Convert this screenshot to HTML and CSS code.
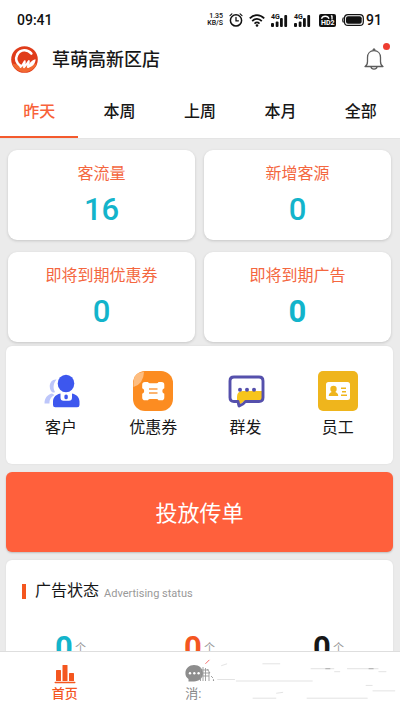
FILE: index.html
```html
<!DOCTYPE html>
<html lang="zh-CN">
<head>
<meta charset="utf-8">
<meta name="viewport" content="width=device-width, initial-scale=1">
<title>草萌高新区店</title>
<link rel="stylesheet" href="styles.css">
</head>
<body>
<div class="status-bar">
  <span class="clock">09:41</span>
  <div class="status-icons">
    <span class="speed"><span>1.35</span><span>KB/S</span></span>
    <svg width="14" height="14" viewBox="0 0 14 14" fill="none" stroke="#111" stroke-linecap="round"><circle cx="7" cy="7.4" r="5.600" stroke-width="1.500"/><path d="M7 4.400v3.400h2.400" stroke-width="1.300"/><path d="M1 2.600 2.900.9M13 2.600 11.100.9" stroke-width="1.200"/></svg>
    <svg width="16" height="13" viewBox="0 0 16 13" fill="none" stroke="#111" stroke-width="1.800"><path d="M.8 4.400C5-.1 11-.1 15.200 4.400M3.200 7.100c3-3 6.600-3 9.600 0M5.500 9.600c1.600-1.500 3.400-1.500 5 0"/><circle cx="8" cy="11.500" r="1.300" fill="#111" stroke="none"/></svg>
    <span class="signal"><span class="signal-type">4G</span><svg width="17" height="13" viewBox="0 0 17 13" fill="#111"><rect y="9" width="3" height="4" rx="1"/><rect x="4.700" y="7.500" width="2.800" height="5.500" rx="1"/><rect x="9" y="4" width="2.800" height="9" rx="1"/><rect x="13.300" y="1" width="2.800" height="12" rx="1"/></svg></span>
    <span class="signal"><span class="signal-type">4G</span><svg width="17" height="13" viewBox="0 0 17 13" fill="#111"><rect y="9" width="3" height="4" rx="1"/><rect x="4.700" y="7.500" width="2.800" height="5.500" rx="1"/><rect x="9" y="4" width="2.800" height="9" rx="1"/><rect x="13.300" y="1" width="2.800" height="12" rx="1"/></svg></span>
    <span class="volte"><svg width="17" height="13" viewBox="0 0 17 13"><rect width="17" height="13" rx="2" fill="#111"/><path d="M2.500 4.800C3.500 1.400 9 1.400 10 4.800M13 1.500v4M12 2.300l1-.8" fill="none" stroke="#fff" stroke-width="1.300"/></svg><span class="volte-text">HD2</span></span>
    <svg width="22" height="12" viewBox="0 0 22 12"><rect x="2.500" y=".6" width="18.800" height="10.800" rx="3.500" fill="none" stroke="#111" stroke-width="1.200"/><path d="M1.500 3.500Q0 6 1.500 8.500" fill="none" stroke="#111" stroke-width="1.200"/><rect x="4" y="2.200" width="15.700" height="7.600" rx="2" fill="#111"/></svg>
    <span class="battery-level">91</span>
  </div>
</div>

<header class="shop-header">
  <svg width="27" height="27" viewBox="0 0 27 27"><circle cx="13.500" cy="13.500" r="13.300" fill="#e03c1a"/><path d="M1 17.500a13.300 13.300 0 0 0 25 0q-10 4-25 0" fill="#f26a32"/><path d="M20.300 7.500C16.500 3 9.500 3 6.300 8.500c-2.300 4.500-.8 9 3.200 11.300" fill="none" stroke="#fff" stroke-width="2.700" stroke-linecap="round"/><path d="M9.500 21c2.200-1.500 3.200-3.800 4.200-5.800.5 2-.7 4.300-.7 6 2-1.500 3.300-4.200 4.800-6.200.3 2-.9 4.200-.9 6" fill="none" stroke="#fff" stroke-width="1.900" stroke-linecap="round" stroke-linejoin="round"/><path d="M16.800 22c.8-4.500 3.200-7.500 7.700-8.800.3 4.300-3.500 7.800-7.700 8.800" fill="#fff"/></svg>
  <h1 class="shop-name">草萌高新区店</h1>
  <button class="bell" type="button" aria-label="通知">
    <svg width="20" height="22" viewBox="0 0 20 22" fill="none" stroke="#5c5c5c" stroke-width="1.300"><path d="M1 18.500c2.300-1 2.500-2.300 2.500-5V9.500C3.500 5.500 6 2.700 10 2.700s6.500 2.800 6.500 6.800v4c0 2.700.2 4 2.500 5z" stroke-linejoin="round"/><path d="M8.800 2.500Q10-.5 11.200 2.500M7 18.800c.5 3 5.500 3 6 0"/></svg>
    <span class="bell-dot"></span>
  </button>
</header>

<nav class="tabs">
  <button type="button" class="tab tab-active">昨天</button>
  <button type="button" class="tab">本周</button>
  <button type="button" class="tab">上周</button>
  <button type="button" class="tab">本月</button>
  <button type="button" class="tab">全部</button>
</nav>

<main class="content">
  <section class="stats">
    <article class="stat"><h2>客流量</h2><p>16</p></article>
    <article class="stat"><h2>新增客源</h2><p>0</p></article>
    <article class="stat"><h2>即将到期优惠券</h2><p>0</p></article>
    <article class="stat stat-strong"><h2>即将到期广告</h2><p>0</p></article>
  </section>

  <section class="panel shortcuts">
    <a class="shortcut" href="#customers">
      <svg width="40" height="40" viewBox="0 0 40 40"><g fill="#bdc6fa"><path d="M15.500 8.500c-6-.5-8.500 6.500-5.500 11.500q2 2.500 4 1C11.500 17 12.500 12 15.500 8.500M11 22.500c-4.500 1-7.500 4.500-7.500 10H8.500c0-4 1-6 5-8.500z"/></g><g fill="#3d57ee"><ellipse cx="25" cy="12.500" rx="8.300" ry="8.700"/><path d="M19.500 22.500c-4 .7-7.500 3.500-7.500 8V34q0 2.300 2.300 2.300h21.900Q38.500 36.300 38.500 34v-3.500c0-4.500-3.500-7.300-7.500-8v4q0 3.300-3 3.300h-5.500q-3 0-3-3.300z"/><rect x="23.400" y="23.500" width="3.400" height="4.800" rx="1.600"/></g></svg>
      <span>客户</span>
    </a>
    <a class="shortcut" href="#coupons">
      <svg width="40" height="40" viewBox="0 0 40 40"><rect width="40" height="40" rx="12" fill="#fc8c21"/><path d="M.5 16V12Q.5 1 11 1Q10.500 13 .5 16" fill="#fdbd80"/><path d="M12 11h3q.5 1.300 2 1.300h6.500q1.500 0 2-1.300H28.500q2.800 0 2.800 2.800V17.200q-2 .8-2 2.800t2 2.800v3.600q0 2.800-2.800 2.800h-3q-.5-1.300-2-1.300H17q-1.500 0-2 1.300H12q-2.800 0-2.800-2.800v-3.600q2-.8 2-2.800t-2-2.800v-3.400Q9.200 11 12 11" fill="#fff"/><path d="M16 18h8.500M16 22h8.500" stroke="#fc9c41" stroke-width="1.600"/></svg>
      <span>优惠券</span>
    </a>
    <a class="shortcut" href="#broadcast">
      <svg width="40" height="40" viewBox="0 0 40 40"><path d="M11 33v-7q0-6 6-6h21v8l-3 2.500H18l-5 3.500z" fill="#f7c51c"/><path d="M8 6h25q4 0 4 4v16.500q0 4-4 4H19.500q-2.500 3.500-6.500 4.500l-1-4.500H8q-4 0-4-4V10q0-4 4-4z" fill="none" stroke="#5550ac" stroke-width="2.900" stroke-linejoin="round"/><g fill="#5550ac"><circle cx="14" cy="18.800" r="2"/><circle cx="21" cy="18.800" r="2"/><circle cx="28" cy="18.800" r="2"/></g></svg>
      <span>群发</span>
    </a>
    <a class="shortcut" href="#staff">
      <svg width="40" height="40" viewBox="0 0 40 40"><rect width="40" height="40" rx="5" fill="#efb51c"/><rect x="8" y="11" width="24" height="18" rx="2.500" fill="#fff"/><g fill="#efb51c"><circle cx="15.500" cy="18" r="3.200"/><path d="M13.800 19h3.400v2c2 .8 3 1.600 3 4h-9.400c0-2.400 1-3.200 3-4z"/><path d="M23 16.500h5v1.500h-5zM24 20h4v1.500h-4zM23 23.500h6V25h-6z"/></g></svg>
      <span>员工</span>
    </a>
  </section>

  <button class="launch" type="button">投放传单</button>

  <section class="panel ad-status">
    <div class="ad-heading"><h2>广告状态</h2><span lang="en">Advertising status</span></div>
    <div class="ad-counts">
      <p class="count count-cyan"><b>0</b><span>个</span></p>
      <p class="count count-orange"><b>0</b><span>个</span></p>
      <p class="count"><b>0</b><span>个</span></p>
    </div>
  </section>
</main>

<nav class="bottom-nav">
  <a class="nav-item nav-active" href="#home">
    <svg width="22" height="20" viewBox="0 0 22 20" fill="#f4561f"><rect x="2" y="6" width="5" height="11" rx=".5"/><rect x="8.500" y="1" width="5" height="16" rx=".5"/><rect x="15" y="9" width="5" height="8" rx=".5"/><rect x=".5" y="17.700" width="21" height="1.500" rx=".7"/></svg>
    <span>首页</span>
  </a>
  <a class="nav-item nav-messages" href="#messages">
    <svg width="30" height="20" viewBox="0 0 30 20"><path d="M9 1c5 0 9 3.300 9 8.200S14 17.400 9 17.400H3.500V15C1.300 13.500.4 11.500.4 9.200.4 4.300 4.500 1 9 1" fill="#8d8d8d"/><g fill="#fff"><circle cx="5" cy="9.300" r="1.200"/><circle cx="9.300" cy="9.300" r="1.200"/><circle cx="13.600" cy="9.300" r="1.200"/></g><path d="M15.500 4v13M18 3v14M20.500 4v13M16 6h8M16 9h9M16 12h8M22 5l3 4M24 8v9M26 12l2 2" fill="none" stroke="#999" stroke-width=".9"/><circle cx="28.500" cy="16" r=".6" fill="#333"/></svg>
    <span>消:</span>
  </a>
  <svg class="nav-traces" viewBox="0 0 220 59" fill="none" stroke="#e2e2e2" aria-hidden="true"><path d="M24 12 28 8" stroke="#f56b69"/><path d="M40 14l6-2M82 12h18M36 28h18M55 29.500h78M131 17h24M168 17h32M155 20h6M200 20h8M187 34h7M194 39.500h23M96 42l7-1M72 47h24M127 47h62"/><path d="M146 17h5M190 17h5" stroke="#aaa"/></svg>
</nav>
</body>
</html>
```
FILE: styles.css
```css
* {
  box-sizing: border-box;
}

body {
  margin: 0;
  height: 100vh;
  display: flex;
  flex-direction: column;
  background: #fff;
  color: #171717;
  font-family: Roboto, "Noto Sans CJK SC", sans-serif;
}

h1, h2, p {
  margin: 0;
}

button {
  border: 0;
  padding: 0;
  background: none;
  color: inherit;
  font-family: inherit;
}

a {
  color: inherit;
  text-decoration: none;
}

svg {
  display: block;
  flex: none;
}

.status-bar {
  height: 40px;
  flex: none;
  display: flex;
  align-items: center;
  justify-content: space-between;
  padding: 0 18px 0 17px;
  color: #111;
}

.clock {
  font-size: 14px;
  font-weight: 500;
}

.status-icons {
  display: flex;
  align-items: center;
  gap: 6px;
}

.speed {
  display: flex;
  flex-direction: column;
  align-items: flex-end;
  font-size: 7px;
  line-height: 7px;
  font-weight: 500;
}

.signal, .volte {
  position: relative;
}

.signal-type {
  position: absolute;
  left: 0;
  top: 0;
  font-size: 7px;
  line-height: 7px;
  font-weight: 700;
}

.volte-text {
  position: absolute;
  left: 2px;
  bottom: 1px;
  color: #fff;
  font-size: 7px;
  line-height: 6px;
  font-weight: 700;
}

.volte {
  margin-left: 2px;
}

.battery-level {
  margin-left: -4px;
  font-size: 14px;
  font-weight: 500;
}

.shop-header {
  height: 38px;
  flex: none;
  display: flex;
  align-items: center;
  gap: 14px;
  padding: 0 16px 0 11px;
}

.shop-name {
  flex: 1;
  padding-top: 2px;
  font-size: 18px;
  line-height: 24px;
  font-weight: 500;
}

.bell {
  position: relative;
}

.bell-dot {
  position: absolute;
  top: -5px;
  right: -6px;
  width: 7px;
  height: 7px;
  border-radius: 50%;
  background: #ee3d31;
}

.tabs {
  flex: none;
  display: grid;
  grid-template-columns: repeat(5, 1fr);
  gap: 2px;
  height: 61px;
  padding-top: 6px;
  border-bottom: 1px solid #e4e4e4;
}

.tab {
  border-bottom: 2px solid transparent;
  font-size: 16px;
  font-weight: 500;
}

.tab-active {
  border-color: #f45a2d;
  color: #f8623a;
}

.content {
  flex: 1;
  min-height: 0;
  overflow-y: auto;
  scrollbar-width: none;
  padding: 11px 7px 8px 6px;
  background: #ebebeb;
}

.stats {
  display: grid;
  grid-template-columns: 1fr 1fr;
  gap: 12px 9px;
  padding: 0 2px;
}

.stat {
  height: 90px;
  padding-top: 12px;
  border-radius: 9px;
  background: #fff;
  box-shadow: 0 1px 3px rgba(0, 0, 0, 0.16);
  text-align: center;
}

.stat h2 {
  color: #f4673f;
  font-size: 16px;
  line-height: 24px;
  font-weight: 400;
}

.stat p {
  margin-top: 6px;
  color: #13b4cb;
  font-size: 31px;
  line-height: 36px;
  font-weight: 500;
}

.stat-strong p {
  font-weight: 700;
}

.panel {
  border-radius: 6px;
  background: #fff;
  box-shadow: 0 0 2px rgba(0, 0, 0, 0.08);
}

.shortcuts {
  display: grid;
  grid-template-columns: repeat(4, 1fr);
  margin-top: 4px;
  height: 118px;
  padding: 25px 9px 0;
}

.shortcut {
  display: flex;
  flex-direction: column;
  align-items: center;
  gap: 5px;
  font-size: 16px;
  line-height: 24px;
}

.launch {
  display: block;
  width: 100%;
  height: 80px;
  margin: 8px 0;
  padding-bottom: 2px;
  border-radius: 6px;
  background: #ff603c;
  box-shadow: 0 1px 2px rgba(0, 0, 0, 0.2);
  color: #fff;
  font-size: 22px;
}

.ad-status {
  padding: 19px 0 16px;
}

.ad-heading {
  display: flex;
  align-items: center;
  gap: 5px;
  padding-left: 16px;
}

.ad-heading::before {
  content: "";
  width: 4px;
  height: 15px;
  margin-right: 4px;
  background: #f4561f;
}

.ad-heading h2 {
  font-size: 16px;
  line-height: 24px;
  font-weight: 400;
}

.ad-heading span {
  padding-top: 6px;
  color: #999;
  font-size: 11px;
  line-height: 16px;
}

.ad-counts {
  display: grid;
  grid-template-columns: repeat(3, 1fr);
  margin-top: 26px;
}

.count {
  display: flex;
  align-items: center;
  justify-content: center;
  gap: 2px;
  line-height: 36px;
}

.count b {
  font-size: 31px;
}

.count span {
  padding-top: 2px;
  color: #999;
  font-size: 11px;
}

.count-cyan b {
  color: #13b4cb;
}

.count-orange b {
  color: #f4561f;
}

.bottom-nav {
  position: relative;
  flex: none;
  display: grid;
  grid-template-columns: repeat(3, 1fr);
  height: 59px;
  padding-top: 12px;
  border-top: 1px solid #dedede;
  background: #fff;
}

.nav-item {
  display: flex;
  flex-direction: column;
  align-items: center;
  padding-right: 4px;
  color: #888;
  font-size: 13px;
  line-height: 20px;
}

.nav-active {
  color: #f4561f;
  font-weight: 500;
}

.nav-messages {
  align-items: flex-start;
  padding-left: 52px;
}

.nav-traces {
  position: absolute;
  top: 0;
  right: 0;
  width: 55%;
  height: 100%;
}
```
